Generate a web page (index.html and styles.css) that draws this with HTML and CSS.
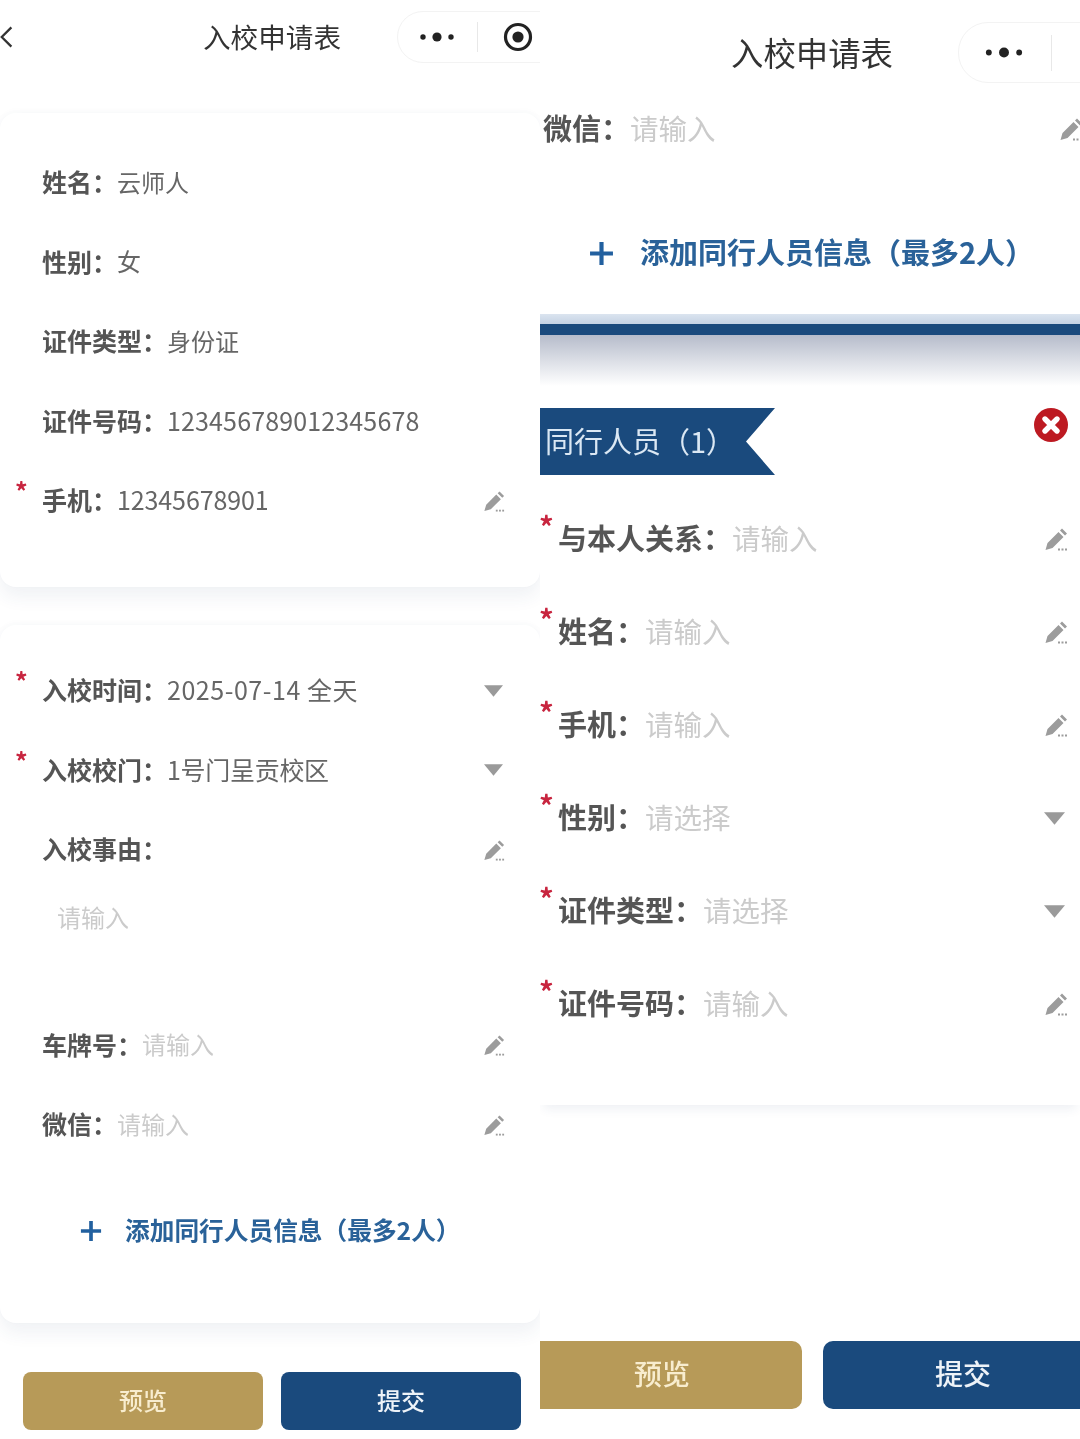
FILE: index.html
```html
<!DOCTYPE html>
<html lang="zh-CN">
<head>
<meta charset="utf-8">
<title>入校申请表</title>
<link rel="stylesheet" href="styles.css">
</head>
<body>
<svg class="defs" aria-hidden="true">
  <symbol id="pencil" viewBox="0 0 24 24">
    <path d="M1.5 23 L3.5 16 L14.5 5 L19.5 10 L8.5 21 Z M16 3.5 L18 1.5 L23 6.5 L21 8.5 Z"/>
    <rect x="14" y="21.5" width="2" height="2"/><rect x="17.5" y="21.5" width="2" height="2"/><rect x="21" y="21.5" width="2" height="2"/>
  </symbol>
  <symbol id="caret" viewBox="0 0 20 12"><path d="M0 0 H20 L10 12 Z"/></symbol>
  <symbol id="dots" viewBox="0 0 36 12"><circle cx="4" cy="6" r="2.7"/><circle cx="18" cy="6" r="4.6"/><circle cx="32" cy="6" r="2.7"/></symbol>
  <symbol id="record" viewBox="0 0 30 30"><circle cx="15" cy="15" r="12.5" fill="none" stroke="currentColor" stroke-width="3.2"/><circle cx="15" cy="15" r="5.6"/></symbol>
  <symbol id="back" viewBox="0 0 16 28"><path d="M13 3 L2 14 L13 25" fill="none" stroke="currentColor" stroke-width="2.6"/></symbol>
  <symbol id="plus" viewBox="0 0 24 24"><path d="M10 1 H14 V10 H23 V14 H14 V23 H10 V14 H1 V10 H10 Z"/></symbol>
  <symbol id="close" viewBox="0 0 34 34"><circle cx="17" cy="17" r="17" fill="#bd1a22"/><path d="M11 11 L23 23 M23 11 L11 23" fill="none" stroke="#fff" stroke-width="5.4" stroke-linecap="round"/></symbol>
</svg>

<main class="shot">
  <section class="pane pane-a">
    <header class="nav">
      <svg class="nav-back"><use href="#back"/></svg>
      <h1 class="nav-title">入校申请表</h1>
      <div class="capsule">
        <svg class="cap-dots"><use href="#dots"/></svg>
        <i class="cap-line"></i>
        <svg class="cap-rec"><use href="#record"/></svg>
      </div>
    </header>

    <div class="card card-one">
      <div class="row"><b class="label">姓名：</b><span class="value">云师人</span></div>
      <div class="row"><b class="label">性别：</b><span class="value">女</span></div>
      <div class="row"><b class="label">证件类型：</b><span class="value">身份证</span></div>
      <div class="row"><b class="label">证件号码：</b><span class="value num">123456789012345678</span></div>
      <div class="row"><i class="star">*</i><b class="label">手机：</b><span class="value num tel">12345678901</span><svg class="pen"><use href="#pencil"/></svg></div>
    </div>

    <div class="card card-two">
      <div class="row"><i class="star">*</i><b class="label">入校时间：</b><span class="value num date">2025-07-14 全天</span><svg class="caret"><use href="#caret"/></svg></div>
      <div class="row"><i class="star">*</i><b class="label">入校校门：</b><span class="value num gate">1号门呈贡校区</span><svg class="caret"><use href="#caret"/></svg></div>
      <div class="row"><b class="label">入校事由：</b><svg class="pen"><use href="#pencil"/></svg></div>
      <div class="area"><span class="hint">请输入</span></div>
      <div class="row"><b class="label">车牌号：</b><span class="hint">请输入</span><svg class="pen"><use href="#pencil"/></svg></div>
      <div class="row"><b class="label">微信：</b><span class="hint">请输入</span><svg class="pen"><use href="#pencil"/></svg></div>
      <div class="add"><svg class="plus"><use href="#plus"/></svg><span class="add-text">添加同行人员信息（最多2人）</span></div>
    </div>

    <footer class="foot">
      <button class="btn gold">预览</button>
      <button class="btn navy">提交</button>
    </footer>
  </section>

  <section class="pane pane-b">
    <header class="nav">
      <h1 class="nav-title">入校申请表</h1>
      <div class="capsule">
        <svg class="cap-dots"><use href="#dots"/></svg>
        <i class="cap-line"></i>
      </div>
    </header>

    <div class="row row-wx"><b class="label">微信：</b><span class="hint">请输入</span><svg class="pen"><use href="#pencil"/></svg></div>
    <div class="add"><svg class="plus"><use href="#plus"/></svg><span class="add-text">添加同行人员信息（最多2人）</span></div>

    <div class="band"></div>

    <div class="person-head">
      <div class="ribbon">同行人员（1）</div>
      <svg class="close"><use href="#close"/></svg>
    </div>

    <div class="person">
      <div class="row"><i class="star">*</i><b class="label">与本人关系：</b><span class="hint">请输入</span><svg class="pen"><use href="#pencil"/></svg></div>
      <div class="row"><i class="star">*</i><b class="label">姓名：</b><span class="hint">请输入</span><svg class="pen"><use href="#pencil"/></svg></div>
      <div class="row"><i class="star">*</i><b class="label">手机：</b><span class="hint">请输入</span><svg class="pen"><use href="#pencil"/></svg></div>
      <div class="row"><i class="star">*</i><b class="label">性别：</b><span class="hint">请选择</span><svg class="caret"><use href="#caret"/></svg></div>
      <div class="row"><i class="star">*</i><b class="label">证件类型：</b><span class="hint">请选择</span><svg class="caret"><use href="#caret"/></svg></div>
      <div class="row"><i class="star">*</i><b class="label">证件号码：</b><span class="hint">请输入</span><svg class="pen"><use href="#pencil"/></svg></div>
    </div>

    <footer class="foot">
      <button class="btn gold">预览</button>
      <button class="btn navy">提交</button>
    </footer>
  </section>
</main>
</body>
</html>
```
FILE: styles.css
```css
* { box-sizing: border-box; }
html, body { margin: 0; padding: 0; background: #fff; }
body { font-family: "Noto Sans CJK SC", "Noto Sans", sans-serif; }
.defs { display: none; }

.shot { display: flex; width: 1080px; height: 1439px; overflow: hidden; filter: blur(0.45px); }
.pane { width: 540px; height: 1439px; flex: none; overflow: hidden; display: flex; flex-direction: column; background: #fff; }

/* nav bar */
.nav { position: relative; flex: none; display: flex; align-items: center; justify-content: center; }
.nav-title { margin: 0 0 4px 4px; font-weight: 400; color: #333; }
.capsule { position: absolute; display: flex; align-items: center; border: 1.5px solid #f3f3f3; color: #222; fill: #222; }
.cap-line { flex: none; width: 1px; background: #e8e8e8; }
.nav-back { position: absolute; left: 0; top: 24px; width: 14px; height: 26px; color: #333; }

.row { position: relative; display: flex; align-items: center; flex: none; }
.label { font-weight: 700; color: #555; white-space: nowrap; margin-bottom: 4px; }
.value { color: #666; white-space: nowrap; margin-bottom: 4px; }
.hint { color: #cbcbcb; white-space: nowrap; margin-bottom: 4px; }
.star { position: absolute; font-style: normal; color: #c8253f; font-weight: 700; line-height: 1; }
.pen { margin-left: auto; flex: none; fill: #9c9c9c; }
.caret { margin-left: auto; flex: none; fill: #9a9a9a; }
.add { display: flex; align-items: center; flex: none; color: #2a6299; font-weight: 700; white-space: nowrap; }
.add-text { margin-bottom: 4px; }
.plus { flex: none; fill: #22609f; }
.foot { flex: none; display: flex; }
.btn { flex: none; border: 0; padding: 0 0 4px; font-family: inherit; font-weight: 500; }
.gold { background: #b79a58; color: #f8edcf; }
.navy { background: #1a4a7d; color: #eef3f8; }

/* left pane */
.pane-a .nav { height: 75px; }
.pane-a .nav-title { font-size: 27.6px; }
.pane-a .capsule { left: 397px; top: 11px; width: 170px; height: 52px; border-radius: 26px; padding-left: 21px; }
.pane-a .cap-dots { width: 36px; height: 12px; }
.pane-a .cap-line { height: 30px; margin-left: 22px; }
.pane-a .cap-rec { width: 30px; height: 30px; margin-left: 25px; flex: none; }

.card { flex: none; background: #fff; border-radius: 16px; box-shadow: 0 10px 18px rgba(40, 70, 110, 0.07), 0 -2px 6px rgba(40, 70, 110, 0.025); }
.card-one { height: 474px; margin-top: 38px; padding: 30px 35px 0 42px; }
.card-two { height: 698px; margin-top: 38px; padding: 26px 35px 0 42px; }
.pane-a .row { height: 79.5px; font-size: 25px; }
.pane-a .label, .pane-a .value, .pane-a .row .hint { margin-bottom: 3px; }
.pane-a .value, .pane-a .hint { font-size: 24px; }
.pane-a .num { font-size: 25px; letter-spacing: 0.15px; }
.pane-a .tel { letter-spacing: -0.1px; }
.pane-a .date { letter-spacing: 0.55px; }
.pane-a .gate { letter-spacing: -0.3px; }
.pane-a .star { left: -27px; top: 17px; font-size: 25px; }
.pane-a .pen { width: 22px; height: 22px; }
.pane-a .caret { width: 19px; height: 12px; margin-right: 2px; }
.area { height: 116px; padding: 9px 0 0 15px; font-size: 24px; }
.pane-a .add { height: 60px; margin-top: 36px; padding-left: 38px; font-size: 24.7px; }
.pane-a .plus { width: 22px; height: 22px; margin-right: 23px; }
.pane-a .foot { margin-top: 49px; padding-left: 23px; gap: 18px; }
.pane-a .btn { width: 240px; height: 58px; border-radius: 8px; font-size: 24px; }

/* right pane */
.pane-b .nav { height: 90px; }
.pane-b .nav-title { font-size: 32.4px; transform: translateY(8px); }
.pane-b .capsule { left: 418px; top: 22px; width: 180px; height: 61px; border-radius: 30px; padding-left: 25px; }
.pane-b .cap-dots { width: 40px; height: 13px; }
.pane-b .cap-line { height: 36px; margin-left: 27px; }

.pane-b .row { height: 93px; font-size: 29px; padding: 0 12px 0 18px; }
.pane-b .hint { font-size: 28.5px; }
.pane-b .row-wx { height: 78px; padding: 0 0 0 3px; margin-right: -3px; }
.pane-b .pen { width: 24px; height: 24px; }
.pane-b .caret { width: 21px; height: 13px; margin-right: 3px; }
.pane-b .star { left: -1px; top: 18px; font-size: 29px; }
.pane-b .add { height: 60px; margin-top: 55px; padding-left: 49px; font-size: 29px; }
.pane-b .plus { width: 25px; height: 25px; margin-right: 26px; }
.band { flex: none; height: 72px; margin-top: 31px; background: linear-gradient(#dbe4ef 0, #c4d2e4 10px, #1a4a7d 10px, #1a4a7d 21px, #b6bccb 21px, #dde0e7 48px, #fff 72px); }
.person-head { flex: none; display: flex; justify-content: space-between; align-items: flex-start; height: 84.5px; margin-top: 22px; padding-right: 12px; }
.ribbon { width: 235px; height: 67px; padding-left: 5px; background: #1a4a7d; color: #dbe8f4; font-size: 29px; line-height: 65px; white-space: nowrap; clip-path: polygon(0 0, 100% 0, 206px 50%, 100% 100%, 0 100%); }
.close { width: 34px; height: 34px; flex: none; }
.person { flex: none; height: 612px; box-shadow: 0 8px 10px -4px rgba(40, 70, 110, 0.08); }
.pane-b .foot { margin: 236px 0 0 -18px; gap: 21px; }
.pane-b .btn { width: 280px; height: 68px; border-radius: 10px; font-size: 28px; }
```
